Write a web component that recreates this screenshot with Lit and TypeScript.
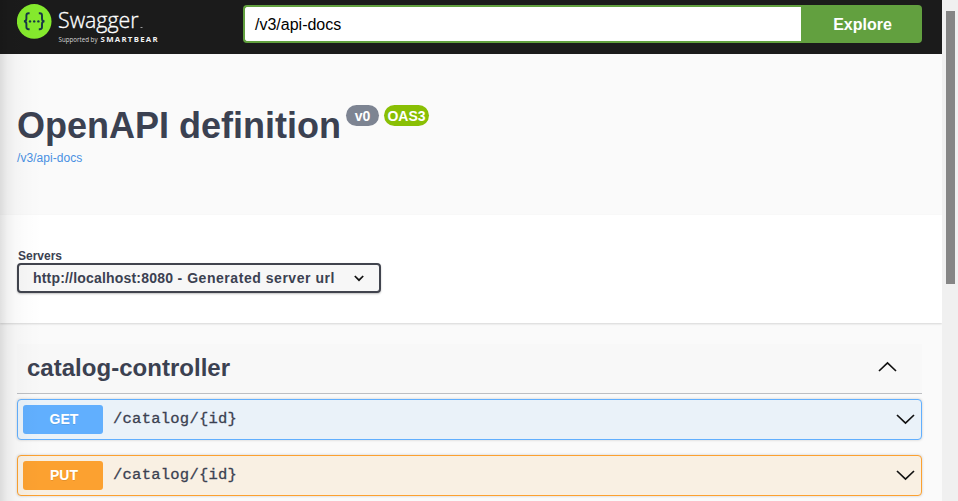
import { LitElement, html, css, svg } from "lit";
import { customElement, property } from "lit/decorators.js";

const chevron = svg`<path d="M1 1 L9.5 9 L18 1" fill="none" stroke="#111" stroke-width="1.7"/>`;

@customElement("swagger-logo")
class SwaggerLogo extends LitElement {
  static styles = css`
    :host { display: block; width: 150px; height: 46px; }
    svg { display: block; }
    .name { font: 300 22.5px "Open Sans", sans-serif; fill: #fff; stroke: #fff; stroke-width: 0.35px; }
    .by { font: 400 6.4px "Open Sans", sans-serif; fill: #d8d8d8; }
    .brand { font: 700 7.8px "Open Sans", sans-serif; fill: #f2f2f2; }
  `;
  render() {
    return html`<svg width="150" height="46" viewBox="0 0 150 46">
      <circle cx="17.2" cy="17.4" r="17.3" fill="#85ea2d" />
      <g fill="none" stroke="#173647" stroke-width="1.9">
        <path d="M12.6 9.2 H11.6 Q9.4 9.2 9.4 11.4 V14.4 Q9.4 17.2 6.9 17.2 Q9.4 17.2 9.4 20 V23 Q9.4 25.2 11.6 25.2 H12.6" />
        <path d="M21.8 9.2 H22.8 Q25 9.2 25 11.4 V14.4 Q25 17.2 27.5 17.2 Q25 17.2 25 20 V23 Q25 25.2 22.8 25.2 H21.8" />
      </g>
      <g fill="#173647">
        <circle cx="13" cy="17.4" r="1.2" /><circle cx="17.2" cy="17.4" r="1.2" /><circle cx="21.4" cy="17.4" r="1.2" />
      </g>
      <text class="name" x="41" y="24.4" textLength="80.5" lengthAdjust="spacingAndGlyphs">Swagger</text>
      <rect x="123.5" y="23" width="2" height="1" fill="#999" />
      <text class="by" x="41.5" y="38.4" textLength="39" lengthAdjust="spacingAndGlyphs">Supported by</text>
      <text class="brand" x="83.6" y="38.4" textLength="57">SMARTBEAR</text>
    </svg>`;
  }
}

@customElement("operation-row")
class OperationRow extends LitElement {
  @property() method = "";
  @property() path = "";
  static styles = css`
    :host { display: block; margin-bottom: 15px; }
    .row {
      box-sizing: border-box; height: 41px; display: flex; align-items: center;
      padding: 0 6px 0 5px; border: 1px solid; border-radius: 4px;
      box-shadow: 0 0 3px rgba(0, 0, 0, 0.19);
    }
    .get { border-color: #61affe; background: #eaf2f9; }
    .put { border-color: #fca130; background: #f9f0e3; }
    .method {
      box-sizing: border-box; width: 80px; height: 29px; padding-left: 2px; border-radius: 3px; text-align: center;
      font: 700 14px/28px "Liberation Sans", sans-serif; color: #fff;
      text-shadow: 0 1px 0 rgba(0, 0, 0, 0.1);
    }
    .get .method { background: #61affe; }
    .put .method { background: #fca130; }
    .path {
      flex: 1; padding: 0 0 2px 10px;
      font: 400 15.5px "Liberation Mono", monospace; color: #3b4151; letter-spacing: 0.25px;
      -webkit-text-stroke: 0.3px #3b4151;
    }
    svg { display: block; }
  `;
  render() {
    return html`<div class="row ${this.method.toLowerCase()}">
      <span class="method">${this.method}</span>
      <span class="path">${this.path}</span>
      <svg width="19" height="11" viewBox="0 0 19 11">${chevron}</svg>
    </div>`;
  }
}

@customElement("app-root")
class AppRoot extends LitElement {
  static styles = css`
    :host {
      display: flex; position: relative; width: 100%; height: 501px; overflow: hidden;
      background: #fafafa; color: #3b4151; font-family: "Liberation Sans", sans-serif;
    }
    * { box-sizing: border-box; }
    .page { flex: 1; min-width: 0; }
    .topbar {
      height: 54px; background: #1b1b1b; display: flex; align-items: flex-start;
      padding: 4px 20px 0 17px;
    }
    .search { margin: 1px 0 0 76px; flex: 1; display: flex; height: 38px; }
    .url {
      flex: 1; border: 2px solid #62a03f; border-right: 0; border-radius: 4px 0 0 4px;
      background: #fff; color: #000; font-size: 16px; line-height: 36px; padding-left: 10px;
    }
    .explore {
      width: 121px; background: #62a03f; border-radius: 0 4px 4px 0; color: #fff; padding-left: 2px;
      font-weight: 700; font-size: 16px; line-height: 40px; text-align: center;
    }
    .info { height: 161px; padding: 50px 17px 0; }
    .heading { display: flex; align-items: flex-start; height: 46px; }
    h1 { margin: 0; font-size: 36px; line-height: 43px; font-weight: 700; white-space: nowrap; width: 329px; }
    .badge {
      height: 21px; border-radius: 11px; background: #7d8492; color: #fff; margin: 1px 5px 0 0;
      font-size: 14px; line-height: 22px; font-weight: 700; text-align: center; width: 33px;
    }
    .oas { background: #89bf04; width: 45px; }
    .link { font-size: 12px; line-height: 16px; color: #4990e2; display: block; letter-spacing: 0.05px; }
    .servers {
      height: 108px; background: #fff; padding: 34px 17px 0;
      box-shadow: 0 1px 2px rgba(0, 0, 0, 0.15);
    }
    .label { font-size: 12px; line-height: 14px; font-weight: 700; padding-left: 1px; }
    .select {
      display: flex; align-items: center; justify-content: space-between; width: 364px; height: 30px;
      border: 2px solid #41444e; border-radius: 4px; background: #f7f7f7;
      padding: 0 15px 1px 14px; font-size: 14px; font-weight: 700; letter-spacing: 0.54px;
      box-shadow: 0 1px 2px rgba(0, 0, 0, 0.25);
    }
    .host { letter-spacing: 0.19px; }
    .select svg { margin-top: 2px; }
    .ops { padding: 21px 20px 0 17px; }
    .tag {
      height: 50px; margin-bottom: 5px; padding: 0 25px 2px 10px; display: flex; align-items: center;
      justify-content: space-between; background: #f8f8f8; border-bottom: 1px solid #bdbfc3;
      font-size: 24px; font-weight: 700; letter-spacing: 0.02px;
    }
    .up { transform: rotate(180deg); margin-bottom: 2px; }
    .track { width: 16px; background: #f0f0f0; padding: 11px 3px 0 4px; }
    .thumb { height: 273px; background: #858585; }
    .edge {
      position: absolute; left: 0; top: 0; width: 42px; height: 100%; pointer-events: none;
      background: linear-gradient(90deg, rgba(0,0,0,.12), rgba(0,0,0,.055) 18%, rgba(0,0,0,.022) 38%, rgba(0,0,0,.008) 70%, transparent);
    }
  `;
  render() {
    return html`
      <main class="page">
        <header class="topbar">
          <swagger-logo></swagger-logo>
          <div class="search"><div class="url">/v3/api-docs</div><div class="explore">Explore</div></div>
        </header>
        <section class="info">
          <div class="heading">
            <h1>OpenAPI definition</h1><span class="badge">v0</span><span class="badge oas">OAS3</span>
          </div>
          <a class="link">/v3/api-docs</a>
        </section>
        <section class="servers">
          <div class="label">Servers</div>
          <div class="select">
            <span><span class="host">http://localhost:8080</span> - Generated server url</span>
            <svg width="10" height="7" viewBox="0 0 10 7"><path d="M.8 1 L5 5.2 L9.2 1" fill="none" stroke="#111" stroke-width="1.7"/></svg>
          </div>
        </section>
        <section class="ops">
          <div class="tag">
            <span>catalog-controller</span>
            <svg class="up" width="19" height="11" viewBox="0 0 19 11">${chevron}</svg>
          </div>
          <operation-row method="GET" path="/catalog/{id}"></operation-row>
          <operation-row method="PUT" path="/catalog/{id}"></operation-row>
        </section>
      </main>
      <div class="track"><div class="thumb"></div></div>
      <div class="edge"></div>
    `;
  }
}
